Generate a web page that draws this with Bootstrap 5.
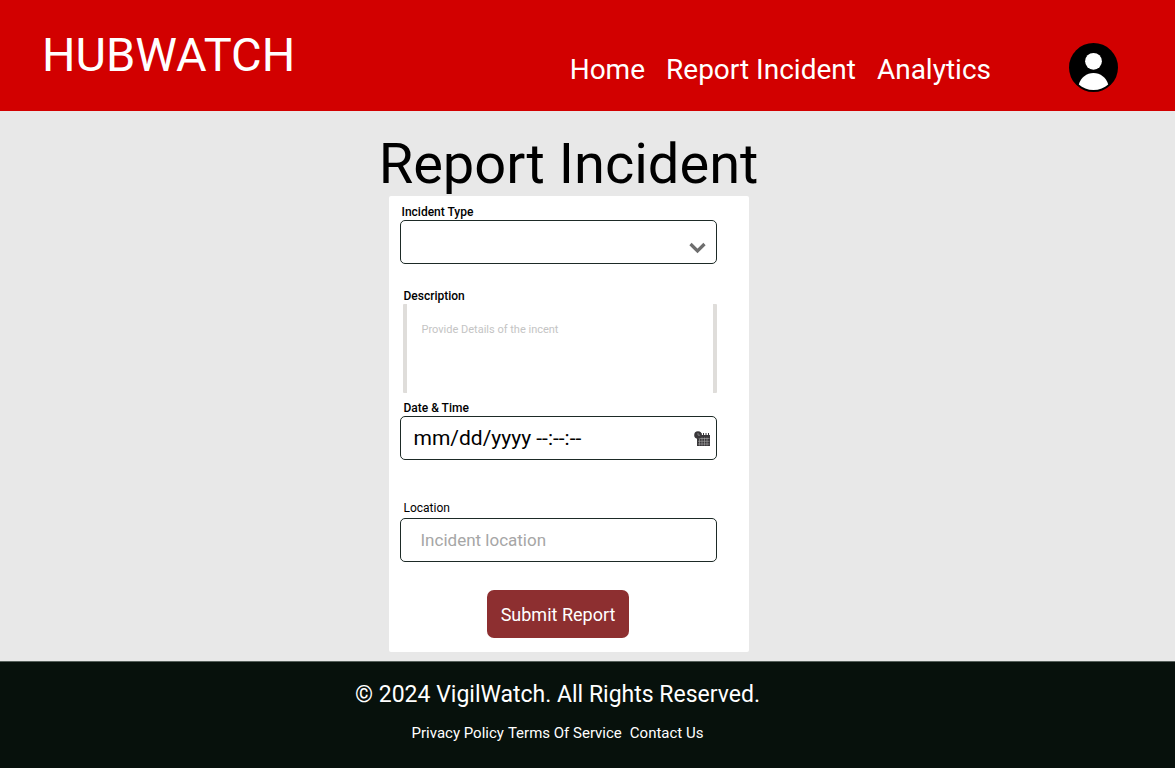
<!DOCTYPE html>
<html lang="en">
<head>
<meta charset="utf-8">
<meta name="viewport" content="width=device-width, initial-scale=1">
<title>HubWatch - Report Incident</title>
<link href="https://cdn.jsdelivr.net/npm/bootstrap@5.3.0/dist/css/bootstrap.min.css" rel="stylesheet">
<style>
  body { font-family: Roboto, "Liberation Sans", sans-serif; background: #e8e8e8; }
  .site-header { background: #d20000; padding: 24px 57px 19px 42px; }
  .site-brand { font-size: 47px; line-height: 60px; color: #fff; padding-top: 1px; margin-bottom: -1px; }
  .site-menu { gap: 21px; margin-right: 78px; padding-top: 26px; }
  .site-menu a { font-size: 28px; line-height: 40px; color: #fff; }
  .site-menu li { line-height: 34px; }
  .avatar-btn { margin-top: 19px; line-height: 0; }
  .page-main { padding: 21px 38px 9px 0; }
  .page-title { font-size: 56px; line-height: 64px; color: #000; }
  .report-card { width: 360px; padding: 8px 32px 14px 11px; border-radius: 2px; }
  .field-label { display: block; font-size: 12px; line-height: 16px; font-weight: 500; color: #000; padding-left: 4px; }
  .field-label-first { padding-left: 2px; }
  .field-label-place { font-weight: 400; margin: 40px 0 2px; }
  .field-box { height: 44px; border: 1px solid #1d2a26; border-radius: 5px; color: #000; background: #fff; }
  .field-select { appearance: none; }
  .field-date { font-size: 21px; padding: 0 40px 0 13px; }
  .field-date::placeholder { color: #000; opacity: 1; }
  .field-place { font-size: 17px; padding: 0 20px; }
  .field-place::placeholder { color: #a6a6a6; opacity: 1; }
  .field-details { height: 89px; margin: 0 0 7px 3px; width: calc(100% - 3px); padding: 18px 15px; font-size: 11px; line-height: 16px; border: solid #dfddda; border-width: 0 4px; border-radius: 1px; resize: none; }
  .field-details::placeholder { color: #c4c4c4; opacity: 1; }
  .field-icon { position: absolute; pointer-events: none; }
  .icon-chevron { right: 11px; top: 22px; }
  .icon-calendar { right: 7px; top: 15px; }
  .submit-btn { width: 142px; height: 48px; padding: 0; font-size: 18px; color: #fff; background: #8d2f30; border: 0; border-radius: 7px; }
  .submit-btn:hover { color: #fff; background: #7a2728; }
  .site-footer { background: #07110c; border-top: 1px solid #56605b; padding: 16px 60px 25px 0; color: #fff; }
  .copy-line { font-size: 23px; line-height: 34px; }
  .foot-links { font-size: 15px; line-height: 20px; margin-top: 11px; gap: 4px; }
  .foot-links a { color: #fff; }
</style>
</head>
<body class="d-flex flex-column min-vh-100">
<header class="site-header d-flex align-items-start">
  <a class="site-brand text-decoration-none" href="#">HUBWATCH</a>
  <nav class="ms-auto" aria-label="Main">
    <ul class="site-menu list-unstyled d-flex mb-0 text-nowrap">
      <li><a class="d-block text-decoration-none" href="#">Home</a></li>
      <li><a class="d-block text-decoration-none" href="#">Report Incident</a></li>
      <li><a class="d-block text-decoration-none" href="#">Analytics</a></li>
    </ul>
  </nav>
  <button class="avatar-btn border-0 bg-transparent p-0" type="button" aria-label="Account">
    <svg width="49" height="49" viewBox="0 0 49 49" aria-hidden="true">
      <circle cx="24.500" cy="24.500" r="24.500" fill="#000"/>
      <circle cx="24.500" cy="18.300" r="8.400" fill="#fff"/>
      <path d="M9.800 41.500C11.700 34.600 17.700 30 24.500 30s12.800 4.600 14.700 11.500C35.500 45 30.300 47 24.500 47s-11-2-14.700-5.500z" fill="#fff"/>
    </svg>
  </button>
</header>

<main class="page-main flex-grow-1 d-flex flex-column align-items-center">
  <h1 class="page-title fw-normal mb-0">Report Incident</h1>
  <form class="report-card bg-white">
    <label class="field-label field-label-first" for="type">Incident Type</label>
    <div class="position-relative mb-4">
      <select class="field-box field-select w-100 d-block" id="type"><option></option></select>
      <svg class="field-icon icon-chevron" width="17" height="12" viewBox="0 0 17 12" aria-hidden="true"><path d="M1.500 2l7 7 7-7" fill="none" stroke="#6e6e6e" stroke-width="3.200"/></svg>
    </div>
    <label class="field-label" for="details">Description</label>
    <textarea class="field-details d-block" id="details" placeholder="Provide Details of the incent"></textarea>
    <label class="field-label" for="when">Date &amp; Time</label>
    <div class="position-relative">
      <input class="field-box field-date w-100 d-block" id="when" type="text" placeholder="mm/dd/yyyy --:--:--">
      <svg class="field-icon icon-calendar" width="16" height="15" viewBox="0 0 16 15" aria-hidden="true">
        <path d="M3 4h13v11H3z" fill="#39373a"/>
        <path d="M7 2v3M9.500 2v3M12 2v3M14.500 2v3" stroke="#39373a"/>
        <path d="M4 7.500h11.500M4 10.300h11.500M4 13h11.500M5.500 6.500v8M8 6.500v8M10.500 6.500v8M13 6.500v8" stroke="#aaa" stroke-width=".6"/>
        <circle cx="4" cy="4" r="3.800" fill="#39373a"/><path d="M4 2v2.200h2" stroke="#999" stroke-width=".7" fill="none"/>
      </svg>
    </div>
    <label class="field-label field-label-place" for="place">Location</label>
    <input class="field-box field-place w-100 d-block" id="place" type="text" placeholder="Incident location">
    <div class="text-center mt-4 pt-1"><button class="submit-btn btn" type="submit">Submit Report</button></div>
  </form>
</main>

<footer class="site-footer text-center">
  <div class="copy-line">© 2024 VigilWatch. All Rights Reserved.</div>
  <nav class="foot-links d-flex justify-content-center" aria-label="Footer">
    <a class="text-decoration-none" href="#">Privacy Policy</a>
    <a class="text-decoration-none" href="#">Terms Of Service</a>
    <a class="text-decoration-none ms-1" href="#">Contact Us</a>
  </nav>
</footer>
<script src="https://cdn.jsdelivr.net/npm/bootstrap@5.3.0/dist/js/bootstrap.bundle.min.js"></script>
</body>
</html>
